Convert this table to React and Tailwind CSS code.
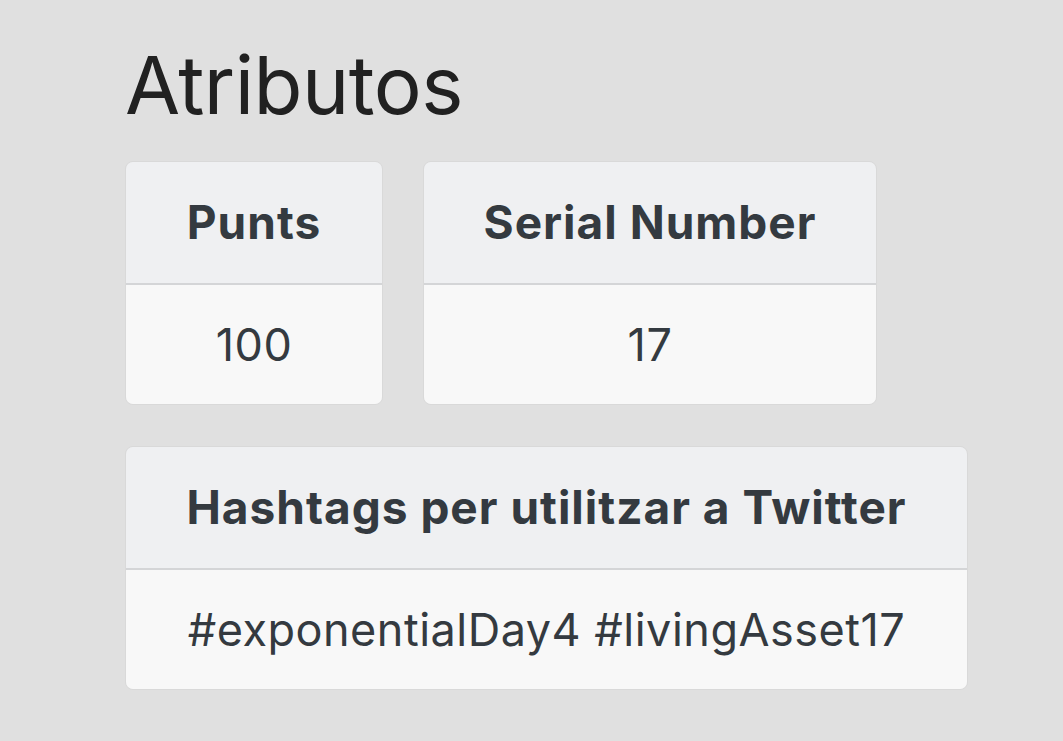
export default function App() {
  const font = { fontFamily: 'Inter, "Noto Sans", sans-serif' };
  const Card = ({ title, value, w }) => (
    <div className={`${w} rounded-[8px] border border-[#d9d9d9] overflow-hidden flex flex-col`}>
      <div className="h-[123px] bg-[#eff0f2] border-b-2 border-[#d4d5d7] flex items-center justify-center">
        <span className="text-[46px] font-bold text-[#343a40] tracking-[1px] whitespace-nowrap">{title}</span>
      </div>
      <div className="h-[119px] bg-[#f8f8f8] flex items-center justify-center">
        <span className="text-[45px] text-[#343a40] tracking-[0.5px] whitespace-nowrap">{value}</span>
      </div>
    </div>
  );
  return (
    <div className="w-[1063px] h-[741px] bg-[#e0e0e0] overflow-hidden" style={font}>
      <div className="pl-[125px] pt-[37px] flex flex-col">
        <h1 className="text-[80px] leading-[96px] text-[#212121] font-normal tracking-[-0.5px]">Atributos</h1>
        <div className="mt-[28px] flex flex-row gap-[40px]">
          <Card title="Punts" value="100" w="w-[258px]" />
          <Card title="Serial Number" value="17" w="w-[454px]" />
        </div>
        <div className="mt-[41px]">
          <Card title="Hashtags per utilitzar a Twitter" value="#exponentialDay4 #livingAsset17" w="w-[843px]" />
        </div>
      </div>
    </div>
  );
}
